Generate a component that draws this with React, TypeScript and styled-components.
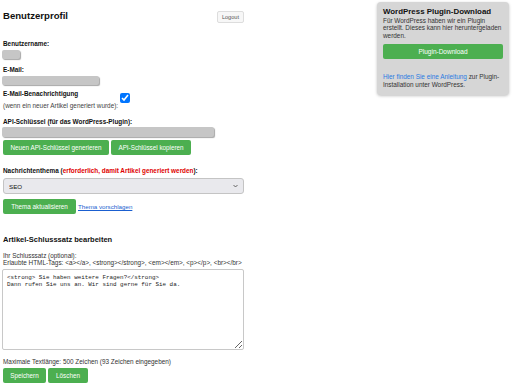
import React from 'react';
import styled, { createGlobalStyle } from 'styled-components';

const GlobalStyle = createGlobalStyle`
  html, body {
    margin: 0;
    padding: 0;
    background: #fff;
  }
  body {
    font-family: 'Liberation Sans', Arial, sans-serif;
    font-size: 6.4px;
    color: #222;
  }
`;

const Page = styled.div`
  display: flex;
  justify-content: space-between;
  align-items: flex-start;
  padding: 0 3px 0 2px;
`;

const Main = styled.main`
  width: 242px;
  display: flex;
  flex-direction: column;
  align-items: flex-start;
`;

const Header = styled.div`
  width: 100%;
  display: flex;
  justify-content: space-between;
  align-items: flex-start;
  padding-top: 10px;
`;

const Title = styled.h2`
  margin: 0 0 0 1px;
  font-size: 9.6px;
  line-height: 11px;
  font-weight: bold;
  color: #111;
`;

const LogoutButton = styled.button`
  margin-top: 1px;
  height: 12px;
  padding: 0 4px;
  font-family: 'Liberation Sans', Arial, sans-serif;
  font-size: 5.6px;
  color: #555;
  background: #f7f7f7;
  border: 1px solid #ddd;
  border-radius: 2px;
`;

const Label = styled.div<{ $top: number }>`
  margin-top: ${(p) => p.$top}px;
  margin-left: 1px;
  font-weight: bold;
  line-height: 7.4px;
  color: #111;
`;

const Hint = styled.div`
  margin-top: 4.3px;
  margin-left: 1px;
  line-height: 7.4px;
  color: #444;
`;

const Redacted = styled.div<{ $width: number; $height: number; $top: number }>`
  width: ${(p) => p.$width}px;
  height: ${(p) => p.$height}px;
  margin-top: ${(p) => p.$top}px;
  background: #c6c6c6;
  border-radius: 2px;
  box-shadow: 1px 1px 1px rgba(0, 0, 0, 0.35);
`;

const NotifyRow = styled.div`
  display: flex;
  align-items: center;
  margin-top: 5px;
`;

const Checkbox = styled.input`
  width: 10px;
  height: 10px;
  margin: -3px 0 0 2px;
  accent-color: #0075ff;
`;

const ButtonRow = styled.div<{ $top: number }>`
  display: flex;
  align-items: center;
  gap: 2px;
  margin-top: ${(p) => p.$top}px;
  margin-left: 1px;
`;

const GreenButton = styled.button<{ $width?: number }>`
  height: 15px;
  width: ${(p) => (p.$width ? `${p.$width}px` : 'auto')};
  padding: 0 4px;
  border: none;
  border-radius: 2px;
  background: #4caf50;
  color: #fff;
  font-family: 'Liberation Sans', Arial, sans-serif;
  font-size: 6.3px;
  cursor: pointer;
`;

const Required = styled.span`
  color: #e00000;
`;

const SelectWrap = styled.div`
  position: relative;
  width: 241px;
  margin: 4px 0 0 1px;
`;

const Select = styled.select`
  width: 100%;
  height: 16px;
  padding: 0 5px;
  appearance: none;
  background: #e9e9ed;
  border: 1px solid #c4c4c4;
  border-radius: 3px;
  font-family: 'Liberation Sans', Arial, sans-serif;
  font-size: 6.2px;
  color: #111;
`;

const Chevron = styled.svg`
  position: absolute;
  right: 6px;
  top: 6px;
  pointer-events: none;
`;

const TextLink = styled.a`
  color: #1a5fd0;
  text-decoration: underline;
  font-size: 6.2px;
`;

const SectionTitle = styled.h3`
  margin: 22px 0 0 1px;
  font-size: 7.5px;
  line-height: 8.6px;
  font-weight: bold;
  color: #111;
`;

const Info = styled.div`
  margin: 7px 0 0 1px;
  line-height: 7px;
  color: #333;
`;

const TextArea = styled.textarea`
  box-sizing: border-box;
  width: 242px;
  height: 81px;
  margin-top: 3px;
  padding: 4px 4px;
  border: 1px solid #c8c8c8;
  border-radius: 2px;
  font-family: 'Liberation Mono', 'Courier New', monospace;
  font-size: 5.9px;
  line-height: 7px;
  color: #222;
`;

const Counter = styled.div`
  margin: 8px 0 0 1px;
  line-height: 7.4px;
  color: #333;
`;

const Aside = styled.aside`
  box-sizing: border-box;
  width: 132px;
  margin-top: 2px;
  padding: 5px 6px 7px;
  background: #d6d6d6;
  border-radius: 4px;
  box-shadow: 0 1px 3px rgba(0, 0, 0, 0.25);
`;

const AsideTitle = styled.h3`
  margin: 0;
  font-size: 7.9px;
  line-height: 9.5px;
  font-weight: bold;
  color: #111;
`;

const AsideText = styled.p<{ $top: number }>`
  margin: ${(p) => p.$top}px 0 0;
  font-size: 6.4px;
  line-height: 7.6px;
  color: #333;
`;

const AsideLink = styled.a`
  color: #2a7ae2;
  text-decoration: none;
`;

const DownloadButton = styled(GreenButton)`
  display: block;
  width: 100%;
  margin-top: 5px;
  font-size: 6.5px;
`;

const App: React.FC = () => (
  <>
    <GlobalStyle />
    <Page>
      <Main>
        <Header>
          <Title>Benutzerprofil</Title>
          <LogoutButton type="button">Logout</LogoutButton>
        </Header>

        <Label $top={16.5}>Benutzername:</Label>
        <Redacted $width={18} $height={9} $top={3} />

        <Label $top={7}>E-Mail:</Label>
        <Redacted $width={97} $height={9} $top={2.6} />

        <NotifyRow>
          <div>
            <Label $top={0}>E-Mail-Benachrichtigung</Label>
            <Hint>(wenn ein neuer Artikel generiert wurde):</Hint>
          </div>
          <Checkbox type="checkbox" defaultChecked />
        </NotifyRow>

        <Label $top={8.5}>API-Schlüssel (für das WordPress-Plugin):</Label>
        <Redacted $width={212} $height={10} $top={2} />

        <ButtonRow $top={3}>
          <GreenButton $width={106}>Neuen API-Schlüssel generieren</GreenButton>
          <GreenButton $width={80}>API-Schlüssel kopieren</GreenButton>
        </ButtonRow>

        <Label $top={11.7}>
          Nachrichtenthema (<Required>erforderlich, damit Artikel generiert werden</Required>):
        </Label>
        <SelectWrap>
          <Select defaultValue="SEO">
            <option value="SEO">SEO</option>
          </Select>
          <Chevron width="5" height="4" viewBox="0 0 10 6">
            <path d="M1 1l4 4 4-4" fill="none" stroke="#444" strokeWidth="1.6" />
          </Chevron>
        </SelectWrap>

        <ButtonRow $top={5}>
          <GreenButton $width={73}>Thema aktualisieren</GreenButton>
          <TextLink href="#">Thema vorschlagen</TextLink>
        </ButtonRow>

        <SectionTitle>Artikel-Schlusssatz bearbeiten</SectionTitle>
        <Info>
          Ihr Schlusssatz (optional):
          <br />
          Erlaubte HTML-Tags: &lt;a&gt;&lt;/a&gt;, &lt;strong&gt;&lt;/strong&gt;, &lt;em&gt;&lt;/em&gt;,
          &lt;p&gt;&lt;/p&gt;, &lt;br&gt;&lt;/br&gt;
        </Info>
        <TextArea
          defaultValue={'<strong> Sie haben weitere Fragen?</strong>\nDann rufen Sie uns an. Wir sind gerne für Sie da.'}
        />
        <Counter>Maximale Textlänge: 500 Zeichen (93 Zeichen eingegeben)</Counter>
        <ButtonRow $top={3}>
          <GreenButton $width={43}>Speichern</GreenButton>
          <GreenButton $width={40}>Löschen</GreenButton>
        </ButtonRow>
      </Main>

      <Aside>
        <AsideTitle>WordPress Plugin-Download</AsideTitle>
        <AsideText $top={0}>
          Für WordPress haben wir ein Plugin erstellt. Dieses kann hier heruntergeladen werden.
        </AsideText>
        <DownloadButton>Plugin-Download</DownloadButton>
        <AsideText $top={14}>
          <AsideLink href="#">Hier finden Sie eine Anleitung</AsideLink> zur Plugin-Installation
          unter WordPress.
        </AsideText>
      </Aside>
    </Page>
  </>
);

export default App;
